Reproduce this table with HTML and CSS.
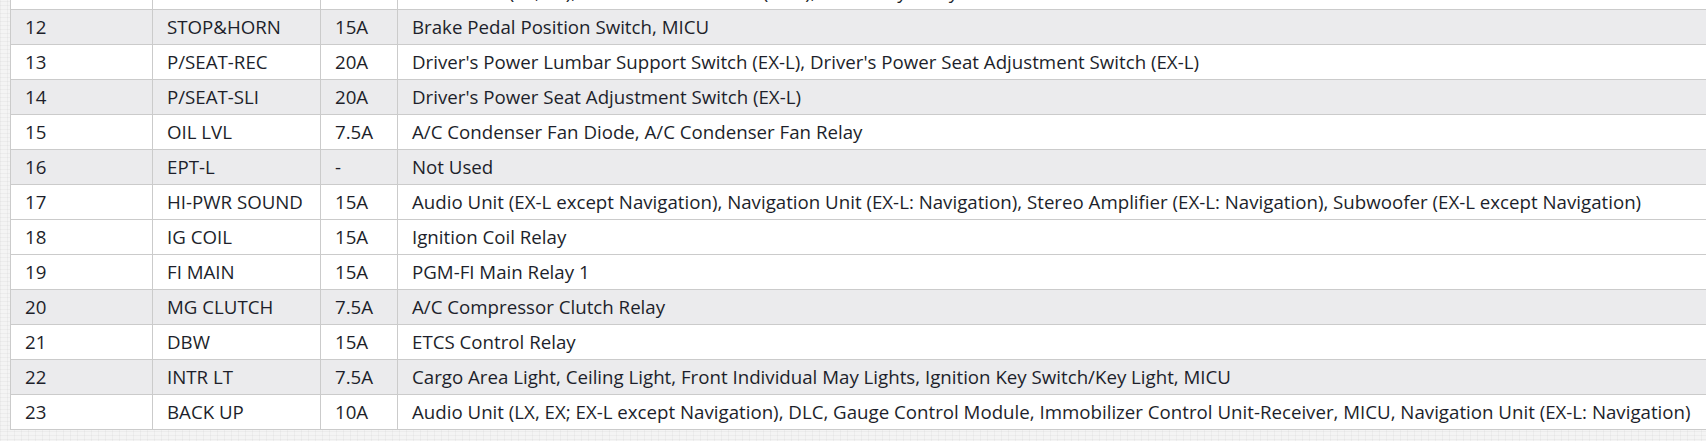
FILE: index.html
```html
<!DOCTYPE html>
<html lang="en">
<head>
<meta charset="utf-8">
<title>Fuse Box</title>
<link rel="stylesheet" href="styles.css">
</head>
<body>
<div class="page">
  <table class="fuses">
    <colgroup>
      <col class="c-no">
      <col class="c-name">
      <col class="c-amp">
      <col class="c-desc">
    </colgroup>
    <tbody>
      <tr class="cut"><td>11</td><td>ACC</td><td>7.5A</td><td>Audio Unit (LX, EX), Climate Control Unit (EX-L), Accessory Relay</td></tr>
      <tr class="alt"><td>12</td><td>STOP&amp;HORN</td><td>15A</td><td>Brake Pedal Position Switch, MICU</td></tr>
      <tr><td>13</td><td>P/SEAT-REC</td><td>20A</td><td>Driver's Power Lumbar Support Switch (EX-L), Driver's Power Seat Adjustment Switch (EX-L)</td></tr>
      <tr class="alt"><td>14</td><td>P/SEAT-SLI</td><td>20A</td><td>Driver's Power Seat Adjustment Switch (EX-L)</td></tr>
      <tr><td>15</td><td>OIL LVL</td><td>7.5A</td><td>A/C Condenser Fan Diode, A/C Condenser Fan Relay</td></tr>
      <tr class="alt"><td>16</td><td>EPT-L</td><td>-</td><td>Not Used</td></tr>
      <tr><td>17</td><td>HI-PWR SOUND</td><td>15A</td><td>Audio Unit (EX-L except Navigation), Navigation Unit (EX-L: Navigation), Stereo Amplifier (EX-L: Navigation), Subwoofer (EX-L except Navigation)</td></tr>
      <tr><td>18</td><td>IG COIL</td><td>15A</td><td>Ignition Coil Relay</td></tr>
      <tr><td>19</td><td>FI MAIN</td><td>15A</td><td>PGM-FI Main Relay 1</td></tr>
      <tr class="alt"><td>20</td><td>MG CLUTCH</td><td>7.5A</td><td>A/C Compressor Clutch Relay</td></tr>
      <tr><td>21</td><td>DBW</td><td>15A</td><td>ETCS Control Relay</td></tr>
      <tr class="alt"><td>22</td><td>INTR LT</td><td>7.5A</td><td>Cargo Area Light, Ceiling Light, Front Individual May Lights, Ignition Key Switch/Key Light, MICU</td></tr>
      <tr><td>23</td><td>BACK UP</td><td>10A</td><td>Audio Unit (LX, EX; EX-L except Navigation), DLC, Gauge Control Module, Immobilizer Control Unit-Receiver, MICU, Navigation Unit (EX-L: Navigation)</td></tr>
    </tbody>
  </table>
</div>
</body>
</html>
```
FILE: styles.css
```css
html, body {
  margin: 0;
  padding: 0;
  overflow: hidden;
}

body {
  background-color: #f4f4f4;
  background-image:
    repeating-linear-gradient(0deg, rgba(0,0,0,0.03) 0 1px, transparent 1px 4px),
    repeating-linear-gradient(90deg, rgba(0,0,0,0.03) 0 1px, transparent 1px 7px);
  font-family: "Open Sans", "Noto Sans", sans-serif;
  color: #1d1f2b;
}

.page {
  padding-left: 10px;
}

.fuses {
  margin-top: -26px;
  width: 1698px;
  table-layout: fixed;
  border-collapse: collapse;
  background: #ffffff;
  font-size: 18.7px;
}

.c-no { width: 142px; }
.c-name { width: 168px; }
.c-amp { width: 77px; }

.fuses td {
  border: 1px solid #cbcbcb;
  height: 34px;
  padding: 0 0 0 14px;
  white-space: nowrap;
  overflow: hidden;
  vertical-align: middle;
  line-height: 24px;
}

.fuses tr.alt td {
  background: #ebebed;
}
```
